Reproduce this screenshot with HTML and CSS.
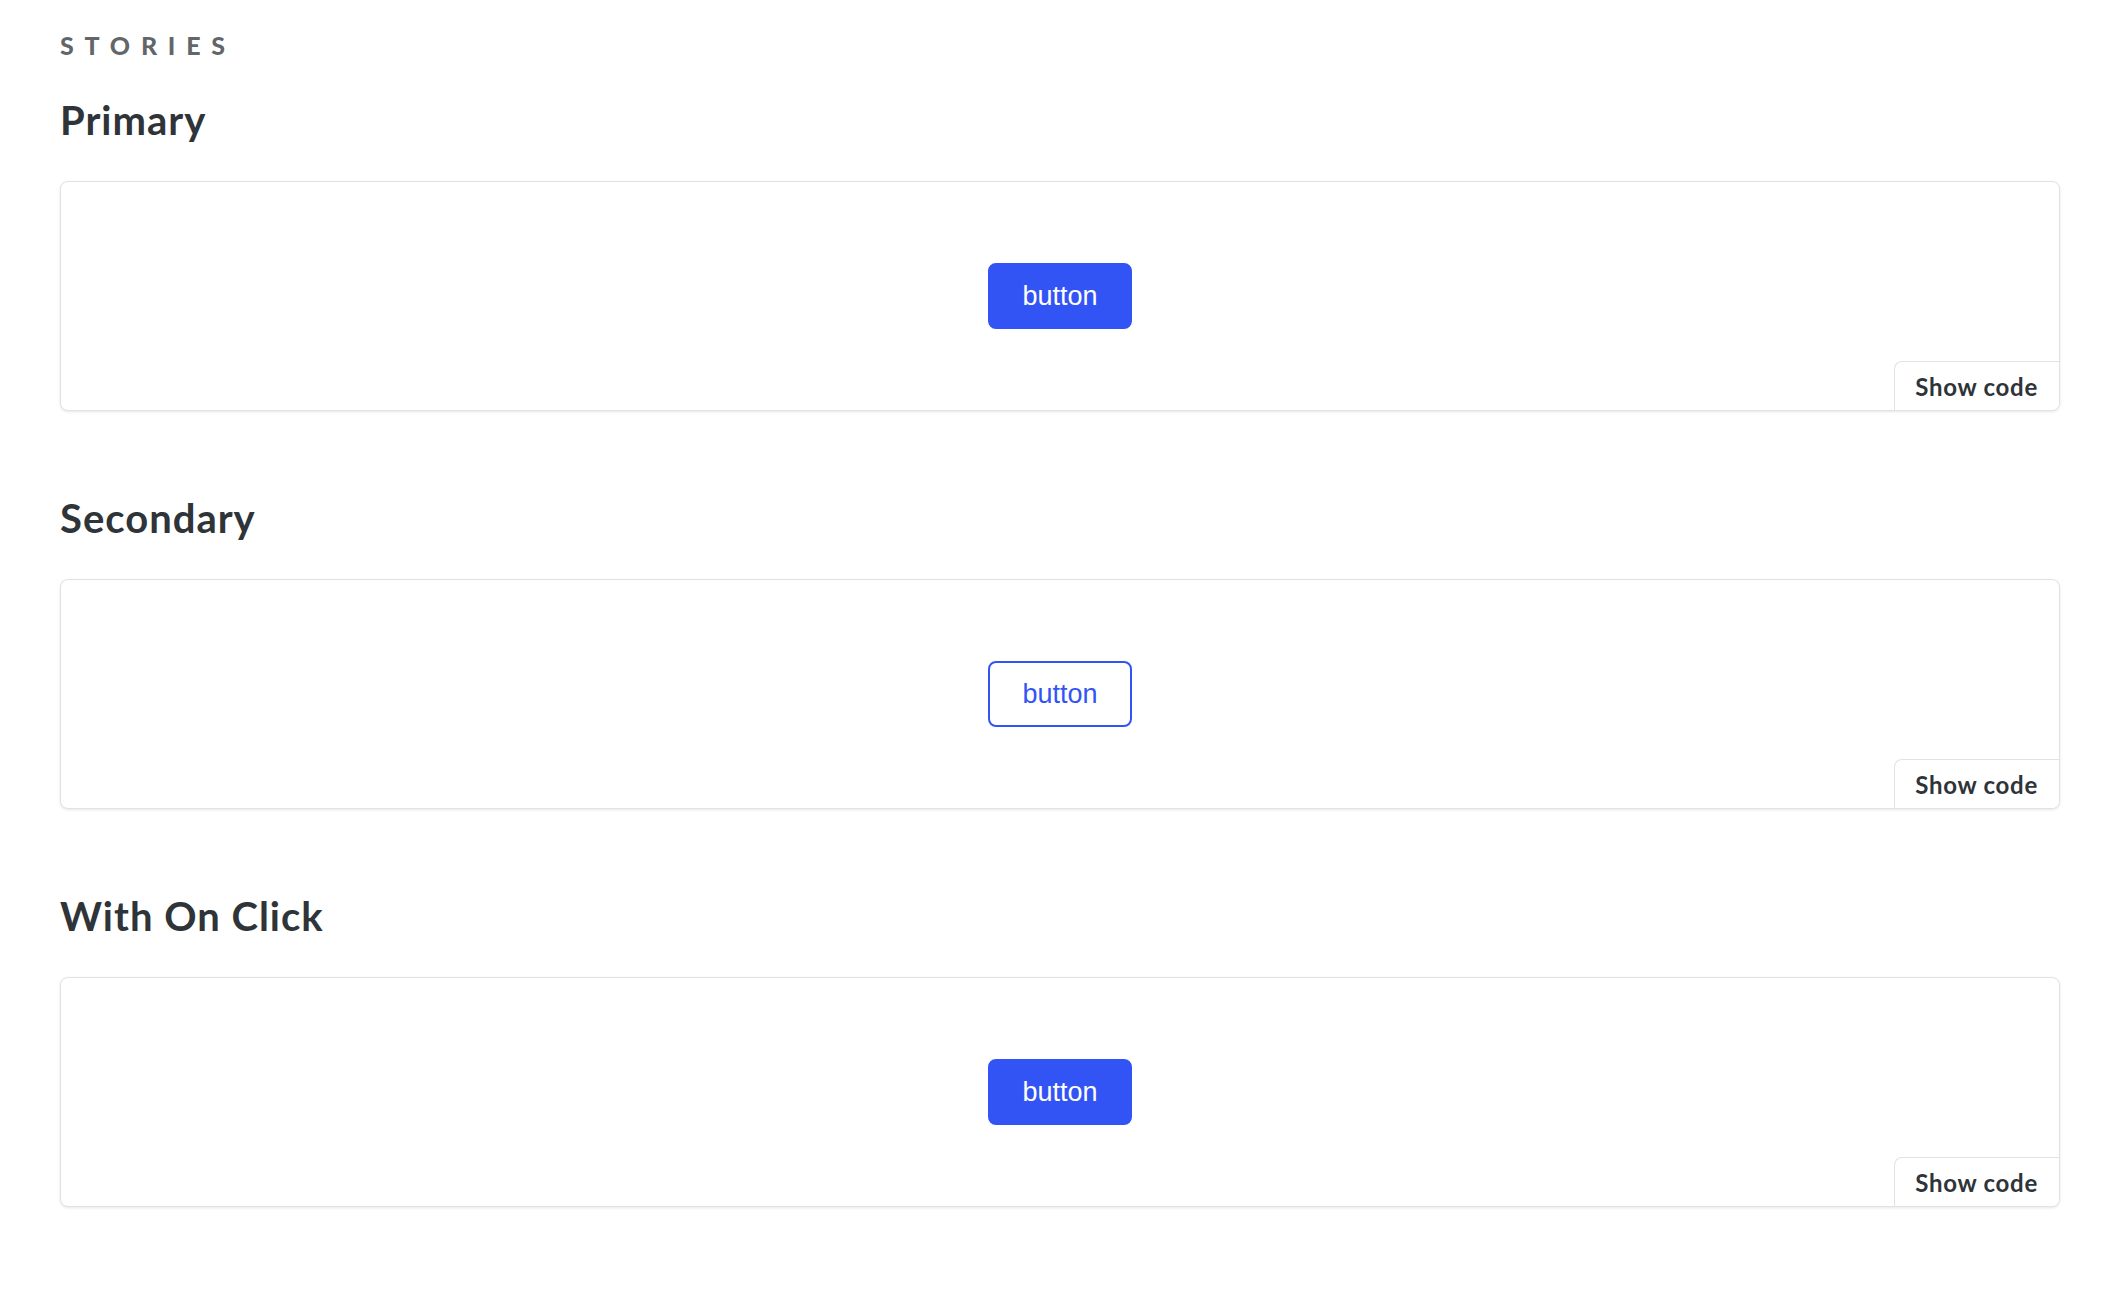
FILE: index.html
```html
<!DOCTYPE html>
<html>
<head>
<meta charset="utf-8">
<link rel="stylesheet" href="styles.css">
</head>
<body>
<main class="docs">
  <h2 class="subheading">Stories</h2>

  <section class="story">
    <h3 class="story-title">Primary</h3>
    <div class="preview">
      <button class="btn btn-primary">button</button>
      <button class="show-code">Show code</button>
    </div>
  </section>

  <section class="story">
    <h3 class="story-title">Secondary</h3>
    <div class="preview">
      <button class="btn btn-secondary">button</button>
      <button class="show-code">Show code</button>
    </div>
  </section>

  <section class="story">
    <h3 class="story-title">With On Click</h3>
    <div class="preview">
      <button class="btn btn-primary">button</button>
      <button class="show-code">Show code</button>
    </div>
  </section>
</main>
</body>
</html>
```

FILE: styles.css
```css
* { box-sizing: border-box; }

html, body {
  margin: 0;
  padding: 0;
  background: #ffffff;
}

body {
  font-family: Lato, "Open Sans", sans-serif;
  color: #333333;
}

.docs {
  padding: 33px 49px 40px 60px;
}

.subheading {
  margin: 0 0 43px 0;
  font-size: 25px;
  line-height: 24px;
  font-weight: 900;
  letter-spacing: 0.43em;
  text-transform: uppercase;
  color: rgba(46, 52, 56, 0.75);
}

.story {
  margin-bottom: 87px;
}

.story-title {
  margin: 0 0 41px 0;
  font-size: 40px;
  line-height: 40px;
  font-weight: 700;
  letter-spacing: 0.025em;
  color: #2e3438;
}

.preview {
  position: relative;
  height: 230px;
  display: flex;
  align-items: center;
  justify-content: center;
  border: 1px solid #dfe3e8;
  border-radius: 8px;
  box-shadow: rgba(0, 0, 0, 0.10) 0 1px 3px 0;
  background: #ffffff;
}

.btn {
  height: 66px;
  padding: 0 32px;
  border-radius: 8px;
  font-family: "Liberation Sans", Arial, sans-serif;
  font-size: 27px;
  cursor: pointer;
}

.btn-primary {
  background: #3354f5;
  color: #ffffff;
  border: 2px solid #3354f5;
}

.btn-secondary {
  background: #ffffff;
  color: #3354f5;
  border: 2px solid #3354f5;
}

.show-code {
  position: absolute;
  right: 0;
  bottom: 0;
  height: 49px;
  padding: 0 21px 0 20px;
  border: 0;
  border-top: 1px solid #dfe3e8;
  border-left: 1px solid #dfe3e8;
  border-top-left-radius: 8px;
  border-bottom-right-radius: 7px;
  background: #ffffff;
  font-family: Lato, "Open Sans", sans-serif;
  font-size: 24px;
  font-weight: 700;
  letter-spacing: 0.03em;
  color: #2e3438;
  cursor: pointer;
}
```
